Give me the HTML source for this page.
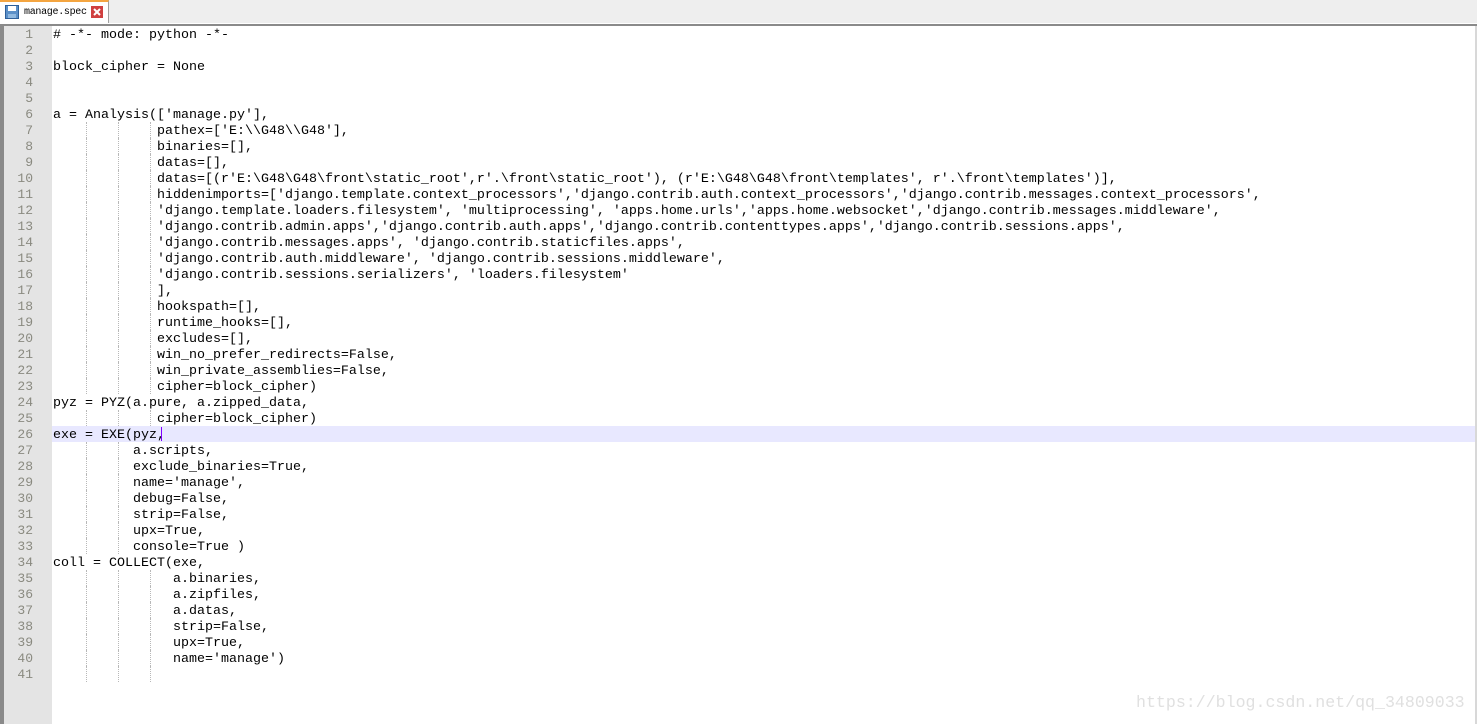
<!DOCTYPE html>
<html><head><meta charset="utf-8"><style>
*{margin:0;padding:0;box-sizing:border-box}
body{width:1477px;height:724px;overflow:hidden;background:#fff;position:relative;font-family:"Liberation Mono",monospace}
#top{position:absolute;left:0;top:0;width:1477px;height:23px;background:#eeeeee}
#tab{position:absolute;left:0;top:0;width:109px;height:24px;background:#fff;border-top:2px solid #f4a540;border-right:1px solid #a0a0a0;font-size:10px;line-height:22px;padding-left:24px;color:#000;font-family:"Liberation Mono",monospace;letter-spacing:-0.3px;white-space:nowrap}
#sep1{position:absolute;left:0;top:23px;width:1477px;height:1px;background:#fff}
#sep2{position:absolute;left:0;top:24px;width:1477px;height:2px;background:#8a8a8a}
#lb{position:absolute;left:0;top:26px;width:4px;height:698px;background:#8a8a8a}
#rb{position:absolute;left:1475px;top:26px;width:2px;height:698px;background:#d8d8d8}
#gut{position:absolute;left:4px;top:26px;width:48px;height:698px;background:#e4e4e4}
.ln{position:absolute;left:4px;width:29px;text-align:right;font-size:13px;color:#8a8a80;height:16px;line-height:16px}
.tx{position:absolute;left:53px;font-size:13.33px;height:16px;line-height:16px;white-space:pre;color:#000}
.g{position:absolute;width:0;border-left:1px dotted #b8b8b8;height:16px}
#cur{position:absolute;left:52px;top:426px;width:1423px;height:16px;background:#e8e8ff}
#wm{position:absolute;left:1136px;top:693px;font-family:"Liberation Mono",monospace;font-size:16.6px;color:#e0e0e0}
</style></head><body>
<div id="top"></div>
<div id="tab"><svg style="position:absolute;left:5px;top:3px" width="14" height="14"><rect x="0.5" y="0.5" width="13" height="13" fill="#5a8fc8" stroke="#2d5f9a"/><rect x="3" y="1" width="8" height="5" fill="#fff"/><rect x="3" y="9" width="8" height="4" fill="#8fb8e0"/></svg>manage.spec<svg style="position:absolute;left:91px;top:4px" width="12" height="12"><rect x="0" y="0" width="12" height="12" fill="#d04040"/><path d="M3 3L9 9M9 3L3 9" stroke="#fff" stroke-width="2"/></svg></div>
<div id="sep1"></div><div id="sep2"></div>
<div id="gut"></div><div id="lb"></div><div id="rb"></div>
<div id="cur"></div>
<div id="lines"></div>
<div style="position:absolute;left:161px;top:427px;width:1px;height:14px;background:#8000ff"></div>
<div id="wm">https://blog.csdn.net/qq_34809033</div>
<script>
var L=["# -*- mode: python -*-","","block_cipher = None","","",
"a = Analysis(['manage.py'],",
"             pathex=['E:\\\\G48\\\\G48'],",
"             binaries=[],",
"             datas=[],",
"             datas=[(r'E:\\G48\\G48\\front\\static_root',r'.\\front\\static_root'), (r'E:\\G48\\G48\\front\\templates', r'.\\front\\templates')],",
"             hiddenimports=['django.template.context_processors','django.contrib.auth.context_processors','django.contrib.messages.context_processors',",
"             'django.template.loaders.filesystem', 'multiprocessing', 'apps.home.urls','apps.home.websocket','django.contrib.messages.middleware',",
"             'django.contrib.admin.apps','django.contrib.auth.apps','django.contrib.contenttypes.apps','django.contrib.sessions.apps',",
"             'django.contrib.messages.apps', 'django.contrib.staticfiles.apps',",
"             'django.contrib.auth.middleware', 'django.contrib.sessions.middleware',",
"             'django.contrib.sessions.serializers', 'loaders.filesystem'",
"             ],",
"             hookspath=[],",
"             runtime_hooks=[],",
"             excludes=[],",
"             win_no_prefer_redirects=False,",
"             win_private_assemblies=False,",
"             cipher=block_cipher)",
"pyz = PYZ(a.pure, a.zipped_data,",
"             cipher=block_cipher)",
"exe = EXE(pyz,",
"          a.scripts,",
"          exclude_binaries=True,",
"          name='manage',",
"          debug=False,",
"          strip=False,",
"          upx=True,",
"          console=True )",
"coll = COLLECT(exe,",
"               a.binaries,",
"               a.zipfiles,",
"               a.datas,",
"               strip=False,",
"               upx=True,",
"               name='manage')",
""];
var h="";
for(var i=0;i<L.length;i++){
 var t=26+i*16;
 h+='<div class="ln" style="top:'+(t+1)+'px">'+(i+1)+'</div>';
 var d=document.createElement('div');d.textContent=L[i];
 h+='<div class="tx" style="top:'+(t+2)+'px">'+d.innerHTML+'</div>';
 var ind=L[i].match(/^ */)[0].length; if(i==40)ind=15;
 var n=L[i].trim()==""&&i!=40?0:Math.floor((ind-1)/4);
 if(ind==0)n=0;
 for(var k=0;k<n&&k<3;k++)h+='<div class="g" style="left:'+(86+k*32)+'px;top:'+t+'px"></div>';
}
document.getElementById('lines').innerHTML=h;
</script>
</body></html>
